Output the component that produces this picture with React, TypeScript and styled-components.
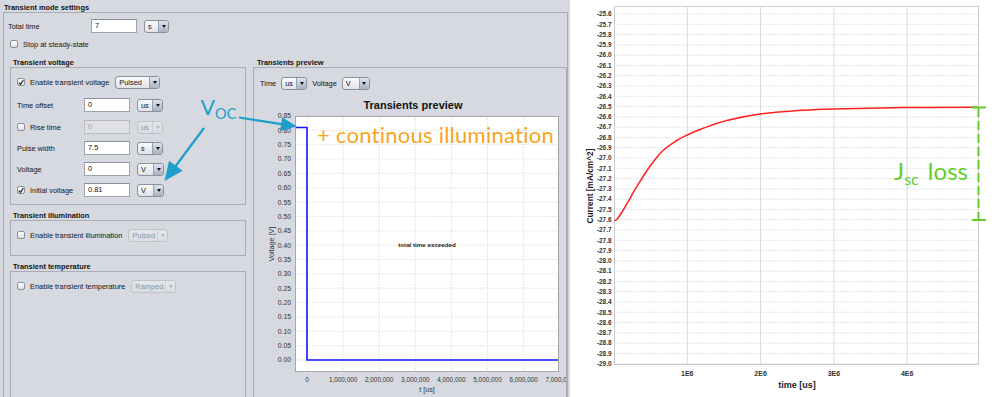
import React from "react";
import styled, { createGlobalStyle } from "styled-components";

const GlobalStyle = createGlobalStyle`
  html, body { margin: 0; padding: 0; background: #ffffff; }
  body { font-family: "Liberation Sans", Arial, sans-serif; }
  #root { width: 1000px; height: 397px; }
`;

const UI_FONT = `"Liberation Sans", Arial, sans-serif`;
const NOTE_FONT = `Lato, "Open Sans", sans-serif`;

const Stage = styled.div`
  position: relative;
  display: flex;
  width: 1000px;
  height: 397px;
  overflow: hidden;
  background: #ffffff;
`;

const Shot = styled.div`
  flex: none;
  width: 570px;
  height: 397px;
  background: #d6d9df;
  display: flex;
  flex-direction: column;
  font-family: ${UI_FONT};
  font-size: 7.4px;
  color: #151515;
  overflow: hidden;
`;

const MainTitle = styled.div`
  box-sizing: border-box;
  height: 12px;
  padding: 3px 0 0 4px;
  line-height: 9px;
  font-weight: bold;
  white-space: nowrap;
`;

const OuterBox = styled.div`
  flex: 1;
  min-height: 0;
  margin: 0 2px 0 3px;
  border: 1px solid #a9acb2;
  border-bottom: none;
  display: flex;
  flex-direction: column;
  padding-top: 6px;
`;

const TopRow = styled.div`
  display: flex;
  align-items: center;
  height: 14px;
  padding-left: 4px;
  gap: 7px;
`;

const RowLabel = styled.span<{ $w: number }>`
  width: ${(p) => p.$w}px;
  margin-right: -7px;
  white-space: nowrap;
`;

const StopRow = styled.div`
  display: flex;
  align-items: center;
  height: 10px;
  margin-top: 6px;
  padding-left: 6px;
`;

const CheckLabel = styled.span`
  display: flex;
  align-items: center;
  gap: 5px;
  white-space: nowrap;
`;

const Box = styled.span<{ $checked?: boolean }>`
  box-sizing: border-box;
  flex: none;
  width: 8px;
  height: 8px;
  border: 1px solid #8c9199;
  border-radius: 2px;
  background: linear-gradient(#ffffff, #dcdfe4);
  display: flex;
  align-items: center;
  justify-content: center;
`;

const Field = styled.div<{ $disabled?: boolean }>`
  box-sizing: border-box;
  flex: none;
  width: 46px;
  height: 14px;
  border: 1px solid ${(p) => (p.$disabled ? "#b9bdc4" : "#9da2aa")};
  border-top-color: ${(p) => (p.$disabled ? "#b3b7be" : "#8a8f97")};
  background: ${(p) => (p.$disabled ? "#dfe1e5" : "#ffffff")};
  color: ${(p) => (p.$disabled ? "#9a9ea5" : "#111111")};
  padding-left: 3px;
  line-height: 12px;
  white-space: nowrap;
`;

const ComboBody = styled.div<{ $w: number; $disabled?: boolean }>`
  box-sizing: border-box;
  flex: none;
  display: flex;
  width: ${(p) => p.$w}px;
  height: 13px;
  border: 1px solid ${(p) => (p.$disabled ? "#c0c4ca" : "#8b9099")};
  border-radius: 3px;
  background: ${(p) =>
    p.$disabled ? "linear-gradient(#e4e6ea, #d9dce1)" : "linear-gradient(#fbfbfc, #dfe2e7)"};
  overflow: hidden;
`;

const ComboText = styled.span<{ $disabled?: boolean }>`
  flex: 1;
  padding-left: 3px;
  line-height: 11px;
  color: ${(p) => (p.$disabled ? "#8f949b" : "#111111")};
  white-space: nowrap;
  overflow: hidden;
`;

const ComboArrow = styled.span<{ $disabled?: boolean }>`
  flex: none;
  width: 9px;
  border-left: 1px solid ${(p) => (p.$disabled ? "#cdd0d5" : "#97a0ae")};
  background: ${(p) =>
    p.$disabled ? "linear-gradient(#e4e6ea, #d9dce1)" : "linear-gradient(#dfe4ec, #a7b2c3)"};
  display: flex;
  align-items: center;
  justify-content: center;
`;

const Tri = styled.span<{ $disabled?: boolean }>`
  width: 0;
  height: 0;
  border-left: 2.5px solid transparent;
  border-right: 2.5px solid transparent;
  border-top: 3.5px solid ${(p) => (p.$disabled ? "#b4b8bf" : "#111111")};
`;

const Columns = styled.div`
  flex: 1;
  min-height: 0;
  display: flex;
  gap: 7px;
  margin-top: 8px;
  padding-left: 6px;
`;

const LeftCol = styled.div`
  flex: none;
  width: 236px;
  display: flex;
  flex-direction: column;
`;

const PreviewCol = styled.div`
  flex: none;
  width: 314px;
  display: flex;
  flex-direction: column;
`;

const SectionTitle = styled.div<{ $mt?: number; $pl?: number }>`
  box-sizing: border-box;
  height: 10px;
  margin-top: ${(p) => p.$mt ?? 0}px;
  padding: 1px 0 0 ${(p) => p.$pl ?? 3}px;
  line-height: 9px;
  font-weight: bold;
  white-space: nowrap;
`;

const SectionBox = styled.div<{ $h?: number }>`
  box-sizing: border-box;
  ${(p) => (p.$h ? `height: ${p.$h}px; flex: none;` : "flex: 1;")}
  border: 1px solid #a9acb2;
  ${(p) => (p.$h ? "" : "border-bottom: none;")}
  padding: 7px 0 0 6px;
  display: flex;
  flex-direction: column;
`;

const InlineRow = styled.div<{ $mt?: number }>`
  display: flex;
  align-items: center;
  gap: 6px;
  height: 14px;
  margin-top: ${(p) => p.$mt ?? 0}px;
`;

const FormRow = styled.div<{ $mt?: number }>`
  display: grid;
  grid-template-columns: 60px 46px 27px;
  column-gap: 7px;
  align-items: center;
  height: 14px;
  margin-top: ${(p) => p.$mt ?? 0}px;
  white-space: nowrap;
`;

const PreviewBox = styled.div`
  flex: 1;
  min-height: 0;
  border: 1px solid #a9acb2;
  border-bottom: none;
  display: flex;
  flex-direction: column;
`;

const ControlsRow = styled.div`
  display: flex;
  align-items: center;
  gap: 5px;
  height: 12px;
  margin: 9px 0 0 6px;
  white-space: nowrap;
`;

const PreviewSvg = styled.svg`
  display: block;
  flex: none;
  margin-top: 6px;
  width: 312px;
  height: 302px;
`;

const RightSvg = styled.svg`
  display: block;
  flex: none;
  width: 430px;
  height: 397px;
`;

const Overlay = styled.div`
  position: absolute;
  inset: 0;
  pointer-events: none;
`;

const OverlaySvg = styled.svg`
  position: absolute;
  left: 0;
  top: 0;
  width: 1000px;
  height: 397px;
`;

const Note = styled.div<{ $x: number; $y: number; $color: string; $size: number; $ls?: number }>`
  position: absolute;
  left: ${(p) => p.$x}px;
  top: ${(p) => p.$y}px;
  color: ${(p) => p.$color};
  font-family: ${NOTE_FONT};
  font-size: ${(p) => p.$size}px;
  letter-spacing: ${(p) => p.$ls ?? 0}px;
  line-height: 1;
  white-space: nowrap;
`;

const NoteSub = styled.span<{ $size: number; $drop: number; $mr?: number }>`
  position: relative;
  top: ${(p) => p.$drop}px;
  font-size: ${(p) => p.$size}px;
  margin-right: ${(p) => p.$mr ?? 0}px;
`;

/* ---------- small widgets ---------- */

function CheckBox({ checked }: { checked?: boolean }) {
  return (
    <Box $checked={checked}>
      {checked && (
        <svg width="7" height="7" viewBox="0 0 7 7">
          <path d="M1 3.6 L2.8 5.6 L6.3 0.8" fill="none" stroke="#222" strokeWidth="1.3" />
        </svg>
      )}
    </Box>
  );
}

function Combo({ w, value, disabled }: { w: number; value: string; disabled?: boolean }) {
  return (
    <ComboBody $w={w} $disabled={disabled}>
      <ComboText $disabled={disabled}>{value}</ComboText>
      <ComboArrow $disabled={disabled}>
        <Tri $disabled={disabled} />
      </ComboArrow>
    </ComboBody>
  );
}

/* ---------- preview chart ---------- */

const PV_Y0 = 360;
const PV_DY = 14.353;
const PV_X0 = 307;
const PV_DX = 36.1;
const PV_LEFT = 295;
const PV_RIGHT = 559;
const PV_TOP = 116;
const PV_BOTTOM = 372;
const PV_XLABELS = ["0", "1,000,000", "2,000,000", "3,000,000", "4,000,000", "5,000,000", "6,000,000", "7,000,000"];

function PreviewChart() {
  const yTicks = Array.from({ length: 18 }, (_, i) => ({ y: PV_Y0 - i * PV_DY, label: (i * 0.05).toFixed(2) }));
  const xTicks = PV_XLABELS.map((label, k) => ({ x: PV_X0 + k * PV_DX, label }));
  const v081 = PV_Y0 - (0.81 / 0.05) * PV_DY;
  return (
    <PreviewSvg viewBox="254 95 312 302" fontFamily={UI_FONT}>
      <text x="413" y="109" fontSize="11" fontWeight="bold" textAnchor="middle" fill="#111">
        Transients preview
      </text>
      <rect x={PV_LEFT} y={PV_TOP} width={PV_RIGHT - PV_LEFT} height={PV_BOTTOM - PV_TOP} fill="#fff" />
      {yTicks.map((t) => (
        <line key={"gy" + t.label} x1={PV_LEFT} x2={PV_RIGHT} y1={t.y} y2={t.y} stroke="#cfcfcf" strokeWidth="0.8" strokeDasharray="1.2 1.6" />
      ))}
      {xTicks.map((t) => (
        <line key={"gx" + t.label} x1={t.x} x2={t.x} y1={PV_TOP} y2={PV_BOTTOM} stroke="#cfcfcf" strokeWidth="0.8" strokeDasharray="1.2 1.6" />
      ))}
      <rect x={PV_LEFT + 0.5} y={PV_TOP + 0.5} width={PV_RIGHT - PV_LEFT - 1} height={PV_BOTTOM - PV_TOP - 1} fill="none" stroke="#a7a7a7" />
      {yTicks.map((t) => (
        <text key={"ly" + t.label} x="291" y={t.y + 2.4} fontSize="6.8" textAnchor="end" fill="#333">
          {t.label}
        </text>
      ))}
      {xTicks.map((t) => (
        <text key={"lx" + t.label} x={t.x} y="381.5" fontSize="6.4" textAnchor="middle" fill="#333">
          {t.label}
        </text>
      ))}
      <text x="274" y="244" fontSize="7.2" textAnchor="middle" fill="#333" transform="rotate(-90 274 244)">
        Voltage [V]
      </text>
      <text x="427" y="391.5" fontSize="7.2" textAnchor="middle" fill="#333">
        t [us]
      </text>
      <text x="427" y="247" fontSize="6.2" fontWeight="bold" textAnchor="middle" fill="#222">
        total time exceeded
      </text>
      <path
        d={`M${PV_LEFT + 1} ${v081} H${PV_X0} V${PV_Y0} H${PV_RIGHT - 1}`}
        fill="none"
        stroke="#1414ff"
        strokeWidth="1.6"
      />
    </PreviewSvg>
  );
}

/* ---------- current chart ---------- */

const RC_LEFT = 614;
const RC_RIGHT = 979;
const RC_TOP = 6;
const RC_BOTTOM = 365;
const RC_Y0 = 14;
const RC_DY = 10.285;
const RC_DX = 73.3;

const CURVE: [number, number][] = [
  [614.5, 220.5],
  [617, 219.3],
  [623.3, 210],
  [630, 198.3],
  [636.7, 186.7],
  [650, 166.2],
  [663.3, 150.3],
  [676.7, 140.5],
  [686.7, 135.2],
  [703.3, 128.3],
  [726.7, 120.4],
  [760, 114],
  [803.3, 110.2],
  [833.3, 108.9],
  [903.3, 107.6],
  [978, 107.3],
];

function smoothPath(pts: [number, number][]) {
  let d = `M${pts[0][0]} ${pts[0][1]}`;
  for (let i = 0; i < pts.length - 1; i++) {
    const p0 = pts[i - 1] || pts[i];
    const p1 = pts[i];
    const p2 = pts[i + 1];
    const p3 = pts[i + 2] || p2;
    const c1x = p1[0] + (p2[0] - p0[0]) / 6;
    const c1y = p1[1] + (p2[1] - p0[1]) / 6;
    const c2x = p2[0] - (p3[0] - p1[0]) / 6;
    const c2y = p2[1] - (p3[1] - p1[1]) / 6;
    d += ` C${c1x.toFixed(2)} ${c1y.toFixed(2)} ${c2x.toFixed(2)} ${c2y.toFixed(2)} ${p2[0]} ${p2[1]}`;
  }
  return d;
}

function CurrentChart() {
  const yTicks = Array.from({ length: 35 }, (_, i) => ({
    y: RC_Y0 + i * RC_DY,
    label: (-25.6 - i * 0.1).toFixed(1),
  }));
  const xTicks = [1, 2, 3, 4].map((k) => ({ x: RC_LEFT + k * RC_DX, label: `${k}E6` }));
  return (
    <RightSvg viewBox="570 0 430 397" fontFamily={UI_FONT}>
      <rect x="570" y="0" width="430" height="397" fill="#fff" />
      {yTicks.map((t) => (
        <line key={"g" + t.label} x1={RC_LEFT} x2={RC_RIGHT} y1={t.y} y2={t.y} stroke="#d2d2d2" strokeWidth="0.9" strokeDasharray="1.2 1.2" />
      ))}
      {xTicks.map((t) => (
        <line key={"v" + t.label} x1={t.x} x2={t.x} y1={RC_TOP} y2={RC_BOTTOM} stroke="#dadada" strokeWidth="1" />
      ))}
      <rect x={RC_LEFT + 0.5} y={RC_TOP + 0.5} width={RC_RIGHT - RC_LEFT - 1} height={RC_BOTTOM - RC_TOP - 1} fill="none" stroke="#cccccc" />
      {yTicks.map((t) => (
        <text key={"l" + t.label} x="611.5" y={t.y + 2.3} fontSize="6.4" fontWeight="bold" textAnchor="end" fill="#333">
          {t.label}
        </text>
      ))}
      {xTicks.map((t) => (
        <text key={"x" + t.label} x={t.x} y="376" fontSize="7" fontWeight="bold" textAnchor="middle" fill="#333">
          {t.label}
        </text>
      ))}
      <text x="797" y="388" fontSize="9" fontWeight="bold" textAnchor="middle" fill="#222">
        time [us]
      </text>
      <text x="593" y="186" fontSize="8.3" fontWeight="bold" textAnchor="middle" fill="#222" transform="rotate(-90 593 186)">
        Current [mA/cm^2]
      </text>
      <path d={smoothPath(CURVE)} fill="none" stroke="#ff2121" strokeWidth="1.5" />
    </RightSvg>
  );
}

/* ---------- annotation arrows ---------- */

function Arrow({ x1, y1, x2, y2, len, half, color, width }: { x1: number; y1: number; x2: number; y2: number; len: number; half: number; color: string; width: number }) {
  const dx = x2 - x1;
  const dy = y2 - y1;
  const L = Math.hypot(dx, dy);
  const ux = dx / L;
  const uy = dy / L;
  const bx = x2 - ux * len;
  const by = y2 - uy * len;
  const px = -uy;
  const py = ux;
  const pts = `${x2},${y2} ${bx + px * half},${by + py * half} ${bx - px * half},${by - py * half}`;
  return (
    <g>
      <line x1={x1} y1={y1} x2={bx + ux * 2} y2={by + uy * 2} stroke={color} strokeWidth={width} />
      <polygon points={pts} fill={color} />
    </g>
  );
}

const TEAL = "#1e9fca";
const ORANGE = "#f8a41c";
const GREEN = "#5fd02b";

export default function App() {
  return (
    <>
      <GlobalStyle />
      <Stage>
        <Shot>
          <MainTitle>Transient mode settings</MainTitle>
          <OuterBox>
            <TopRow>
              <RowLabel $w={83}>Total time</RowLabel>
              <Field>7</Field>
              <Combo w={25} value="s" />
            </TopRow>
            <StopRow>
              <CheckLabel>
                <CheckBox />
                Stop at steady-state
              </CheckLabel>
            </StopRow>
            <Columns>
              <LeftCol>
                <SectionTitle>Transient voltage</SectionTitle>
                <SectionBox $h={138}>
                  <InlineRow>
                    <CheckLabel>
                      <CheckBox checked />
                      Enable transient voltage
                    </CheckLabel>
                    <Combo w={45} value="Pulsed" />
                  </InlineRow>
                  <FormRow $mt={9}>
                    <span>Time offset</span>
                    <Field>0</Field>
                    <Combo w={26} value="us" />
                  </FormRow>
                  <FormRow $mt={8}>
                    <CheckLabel>
                      <CheckBox />
                      Rise time
                    </CheckLabel>
                    <Field $disabled>0</Field>
                    <Combo w={26} value="us" disabled />
                  </FormRow>
                  <FormRow $mt={7}>
                    <span>Pulse width</span>
                    <Field>7.5</Field>
                    <Combo w={26} value="s" />
                  </FormRow>
                  <FormRow $mt={7}>
                    <span>Voltage</span>
                    <Field>0</Field>
                    <Combo w={27} value="V" />
                  </FormRow>
                  <FormRow $mt={7}>
                    <CheckLabel>
                      <CheckBox checked />
                      Initial voltage
                    </CheckLabel>
                    <Field>0.81</Field>
                    <Combo w={27} value="V" />
                  </FormRow>
                </SectionBox>
                <SectionTitle $mt={5}>Transient illumination</SectionTitle>
                <SectionBox $h={36}>
                  <InlineRow>
                    <CheckLabel>
                      <CheckBox />
                      Enable transient illumination
                    </CheckLabel>
                    <Combo w={40} value="Pulsed" disabled />
                  </InlineRow>
                </SectionBox>
                <SectionTitle $mt={5}>Transient temperature</SectionTitle>
                <SectionBox>
                  <InlineRow>
                    <CheckLabel>
                      <CheckBox />
                      Enable transient temperature
                    </CheckLabel>
                    <Combo w={45} value="Ramped" disabled />
                  </InlineRow>
                </SectionBox>
              </LeftCol>
              <PreviewCol>
                <SectionTitle $pl={4}>Transients preview</SectionTitle>
                <PreviewBox>
                  <ControlsRow>
                    <span>Time</span>
                    <Combo w={26} value="us" />
                    <span>Voltage</span>
                    <Combo w={28} value="V" />
                  </ControlsRow>
                  <PreviewChart />
                </PreviewBox>
              </PreviewCol>
            </Columns>
          </OuterBox>
        </Shot>
        <CurrentChart />
        <Overlay>
          <OverlaySvg viewBox="0 0 1000 397">
            <Arrow x1={239} y1={117.5} x2={297} y2={126.5} len={16} half={7} color={TEAL} width={2.2} />
            <Arrow x1={204} y1={128} x2={164.5} y2={181} len={19} half={8.5} color={TEAL} width={2.4} />
            <line x1="972" x2="986" y1="107.5" y2="107.5" stroke={GREEN} strokeWidth="2" />
            <line x1="972" x2="986" y1="220" y2="220" stroke={GREEN} strokeWidth="2" />
            <line x1="978.5" x2="978.5" y1="108" y2="220" stroke={GREEN} strokeWidth="2" strokeDasharray="9 4" />
          </OverlaySvg>
          <Note $x={200.5} $y={97} $color={TEAL} $size={21.5}>
            V<NoteSub $size={14.5} $drop={4}>OC</NoteSub>
          </Note>
          <Note $x={317} $y={123.5} $color={ORANGE} $size={22} $ls={0.25}>
            + continous illumination
          </Note>
          <Note $x={894} $y={158.7} $color={GREEN} $size={24}>
            J<NoteSub $size={16} $drop={5} $mr={3}>sc</NoteSub> loss
          </Note>
        </Overlay>
      </Stage>
    </>
  );
}
